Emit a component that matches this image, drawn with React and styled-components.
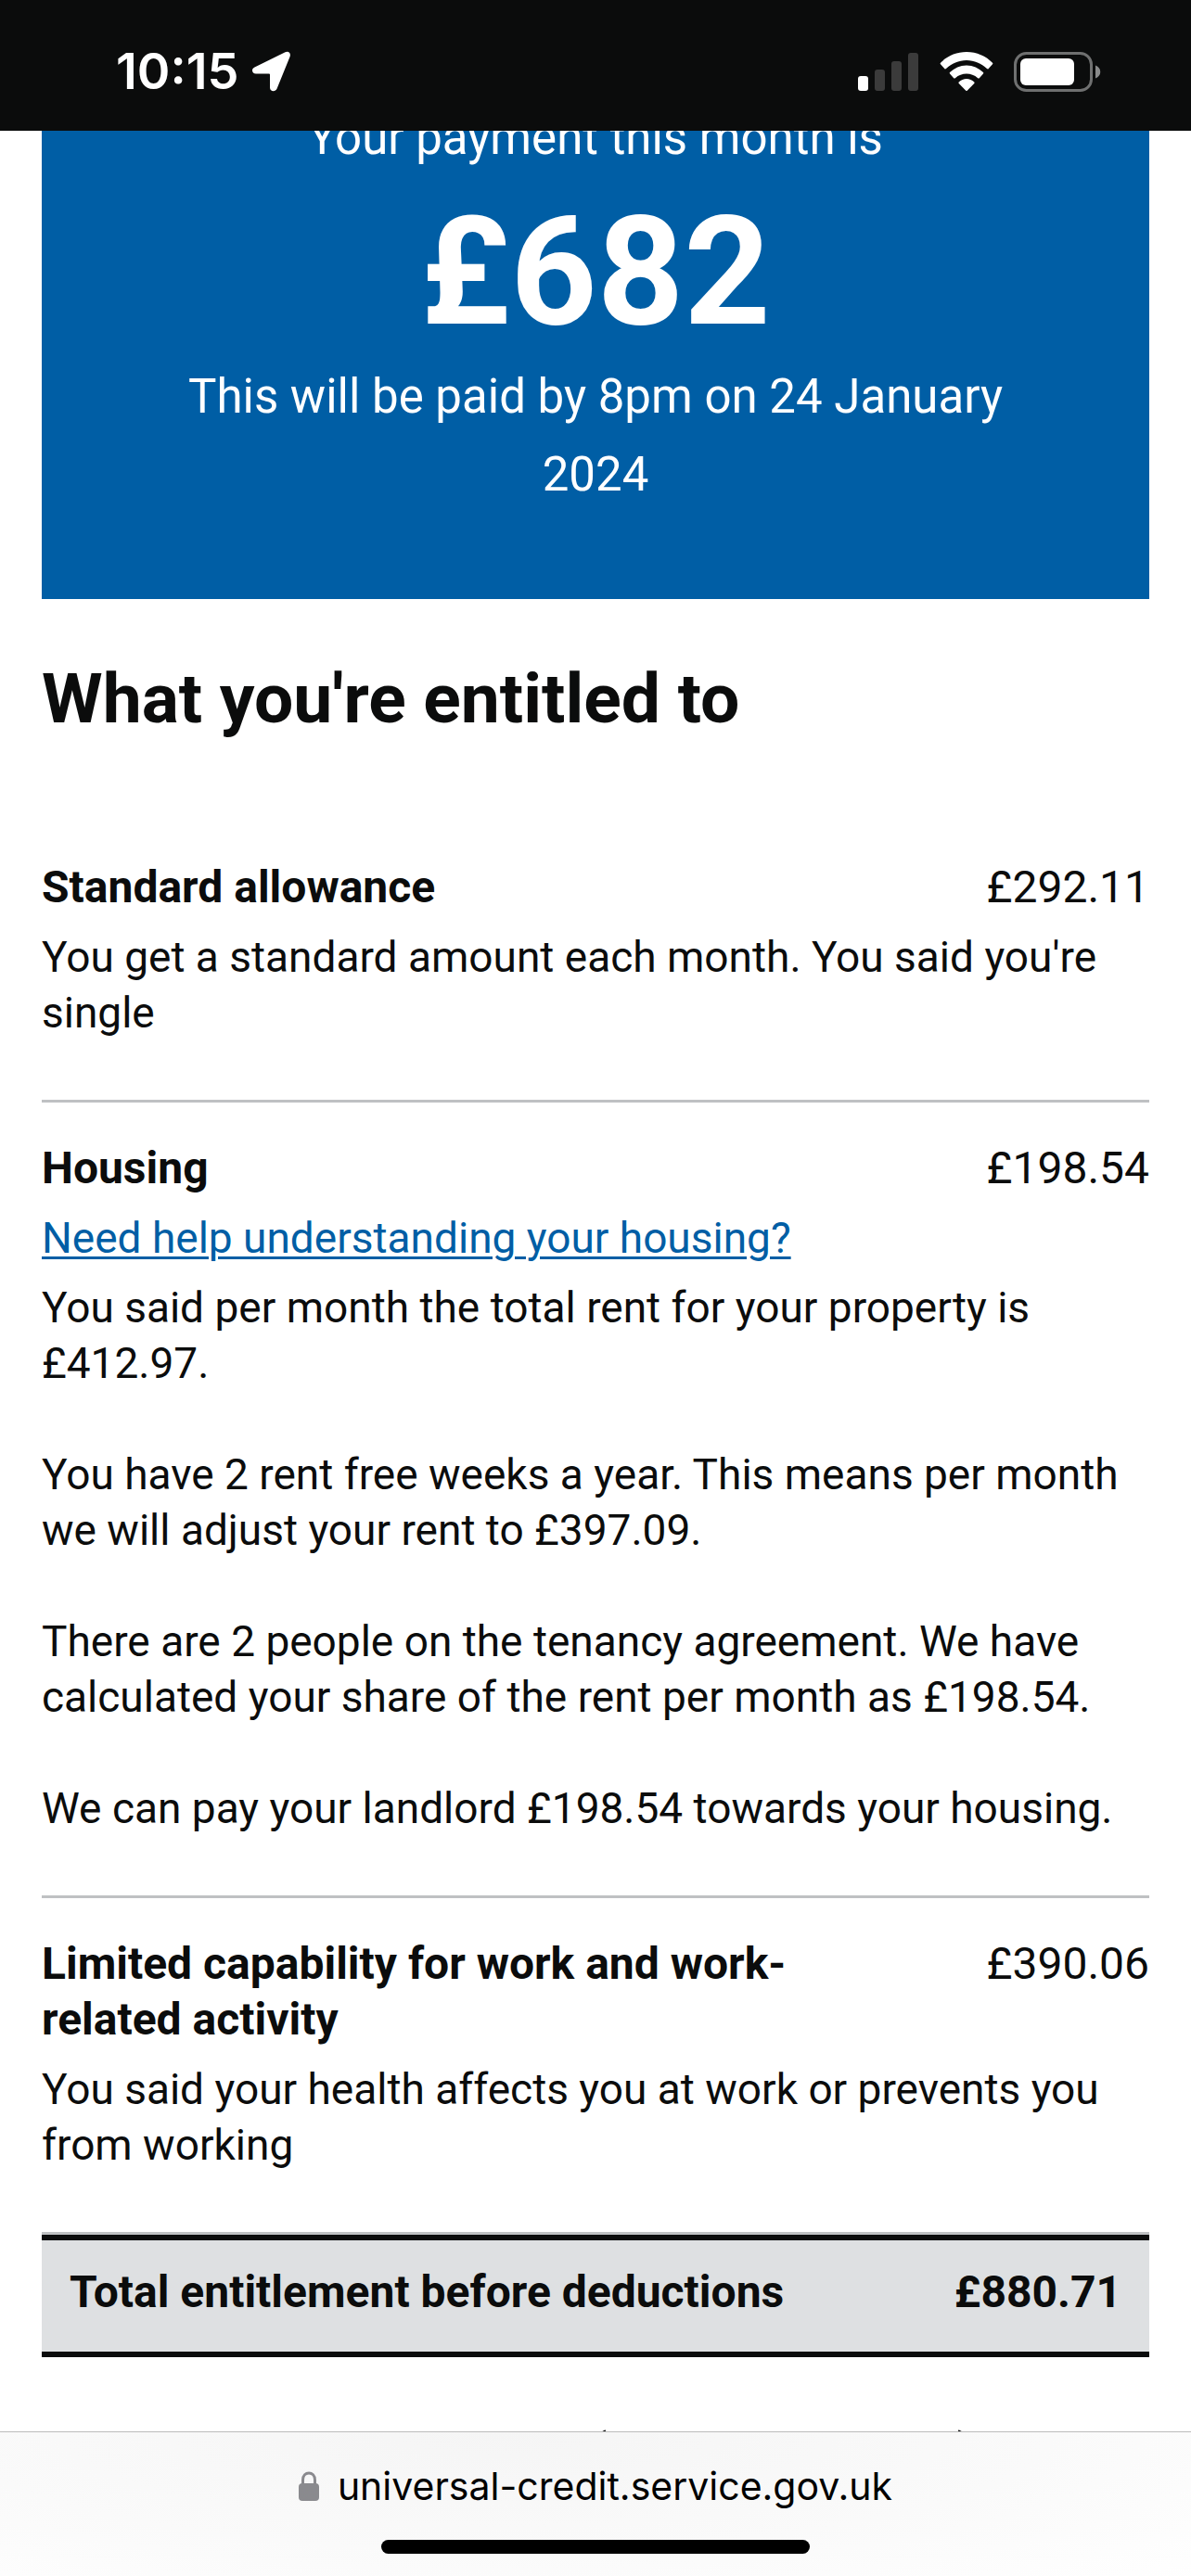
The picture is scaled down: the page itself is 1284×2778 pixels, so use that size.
import React from 'react';
import styled, { createGlobalStyle } from 'styled-components';

const GlobalStyle = createGlobalStyle`
  * {
    box-sizing: border-box;
  }

  body {
    margin: 0;
    background: #ffffff;
    color: #0b0c0c;
    font-family: Roboto, "Noto Sans", sans-serif;
  }

  h1, h2, h3, p {
    margin: 0;
  }
`;

const Screen = styled.div`
  display: flex;
  flex-direction: column;
  height: 100vh;
`;

const StatusBar = styled.header`
  display: flex;
  align-items: center;
  justify-content: space-between;
  flex: none;
  padding: 44px 96px 31px 125px;
  background: #0b0c0c;
  color: #ffffff;
`;

const StatusGroup = styled.div`
  display: flex;
  align-items: center;
  gap: ${(props) => props.$gap};
`;

const Time = styled.time`
  font-family: Inter, sans-serif;
  font-size: 54px;
  font-weight: 600;
  line-height: 66px;
`;

const Viewport = styled.main`
  flex: 1;
  min-height: 0;
  overflow: hidden;
`;

// The page is scrolled so that the top of the panel sits behind the status bar
const Content = styled.div`
  margin-top: -84px;
  padding: 0 45px;
`;

const Panel = styled.section`
  padding: 50px 120px 92px;
  background: #005ea5;
  color: #ffffff;
  text-align: center;
`;

const PanelText = styled.p`
  font-size: 51px;
  line-height: 84px;
`;

const PanelAmount = styled.h1`
  margin-top: 10px;
  font-size: 163px;
  font-weight: 700;
  line-height: 185px;
`;

const Heading = styled.h2`
  margin: 68px 0 94px;
  font-size: 75px;
  font-weight: 700;
  line-height: 78px;
`;

const Row = styled.section`
  display: flex;
  flex-direction: column;
  gap: 15px;
  padding: 41px 0 64px;
  border-bottom: 3px solid #bfc1c3;
  font-size: 46px;
  line-height: 60px;
`;

const RowHeader = styled.div`
  display: grid;
  grid-template-columns: 3fr 1fr;
`;

const RowTitle = styled.h3`
  font-size: 48px;
  font-weight: 700;
`;

const Amount = styled.p`
  font-size: 48px;
  text-align: right;
`;

const Paragraphs = styled.div`
  display: flex;
  flex-direction: column;
  gap: 60px;
`;

const HelpLink = styled.a`
  align-self: flex-start;
  color: #005ea5;
  text-decoration-thickness: 3px;
  text-underline-offset: 4px;
`;

const Total = styled.div`
  display: flex;
  justify-content: space-between;
  margin-bottom: 72px;
  padding: 26px 30px 34px;
  border: solid #0b0c0c;
  border-width: 6px 0;
  background: #dee0e2;
  font-size: 48px;
  font-weight: 700;
  line-height: 60px;
`;

const BrowserBar = styled.footer`
  display: flex;
  flex-direction: column;
  align-items: center;
  justify-content: space-between;
  flex: none;
  height: 156px;
  padding: 31px 0 24px;
  border-top: 1px solid #bcbcbc;
  background: radial-gradient(ellipse 84% 150% at 42% 0%, #f5f5f5 0%, #fafafa 55%, #ffffff 100%);
`;

const Address = styled.div`
  display: flex;
  align-items: center;
  gap: 20px;
  color: #000000;
  font-family: Inter, sans-serif;
  font-size: 41px;
  line-height: 54px;
`;

const HomeIndicator = styled.div`
  width: 36%;
  height: 15px;
  border-radius: 8px;
  background: #000000;
`;

const LocationIcon = () => (
  <svg width="43" height="44" viewBox="0 0 43 44" aria-hidden="true">
    <path
      d="M3.500 17.500 L36.500 1.300 C40-.5 43 2.500 41.500 6.200 L27.500 40.800 C26 44.500 20 44 20 39.500 V25.500 Q20 24.500 19 24.500 H5 C.5 24.500 -.5 19.500 3.500 17.500Z"
      fill="#fff"
    />
  </svg>
);

const SignalIcon = () => (
  <svg width="66" height="52" viewBox="0 0 66 52" aria-hidden="true">
    <rect x="0" y="31" width="11" height="16" rx="3" fill="#fff" />
    <rect x="18" y="24" width="11" height="23" rx="3" fill="#3b3b3b" />
    <rect x="36" y="15" width="11" height="32" rx="3" fill="#3b3b3b" />
    <rect x="54" y="6" width="11" height="41" rx="3" fill="#3b3b3b" />
  </svg>
);

const WifiIcon = () => (
  <svg width="58" height="43" viewBox="0 0 58 43" aria-hidden="true" fill="#fff">
    <path d="M29 0 C40 0 50 4.500 57 11.700 Q57.700 12.500 57 13.300 L52.500 18.200 Q51.800 18.700 51 18 C45 12.500 37.500 9 29 9 S13 12.500 7 18 Q6.200 18.700 5.500 18.200 L1 13.300 Q.3 12.500 1 11.700 C8 4.500 18 0 29 0Z" />
    <path d="M29 14.500 C36 14.500 42 17.500 47 22 Q47.700 22.700 47 23.500 L42.800 28.200 Q42 28.800 41.200 28.200 C37.500 25 33.500 23.500 29 23.500 S20.500 25 16.800 28.200 Q16 28.800 15.200 28.200 L11 23.500 Q10.300 22.700 11 22 C16 17.500 22 14.500 29 14.500Z" />
    <path d="M29 29 C32 29 35 30.500 37.300 32.500 Q38 33.200 37.300 34 L29.700 41.700 Q29 42.300 28.300 41.700 L20.700 34 Q20 33.200 20.700 32.500 C23 30.500 26 29 29 29Z" />
  </svg>
);

const BatteryIcon = () => (
  <svg width="95" height="43" viewBox="0 0 95 43" aria-hidden="true">
    <rect x="1.500" y="1.500" width="82" height="40" rx="12" fill="none" stroke="#6f7070" strokeWidth="3" />
    <rect x="7" y="7" width="58" height="29" rx="6" fill="#fff" />
    <path d="M88 14.500 C95 17 95 26 88 28.500Z" fill="#8a8b8b" />
  </svg>
);

const LockIcon = () => (
  <svg width="22" height="33" viewBox="0 0 22 33" aria-hidden="true">
    <path d="M4.500 16 V9.500 C4.500 -.5 17.500 -.5 17.500 9.500 V16" fill="none" stroke="#8a8a8e" strokeWidth="3" />
    <rect x="0" y="13" width="22" height="19" rx="4" fill="#8a8a8e" />
  </svg>
);

const EntitlementRow = ({ title, amount, children }) => (
  <Row>
    <RowHeader>
      <RowTitle>{title}</RowTitle>
      <Amount>{amount}</Amount>
    </RowHeader>
    {children}
  </Row>
);

const App = () => (
  <Screen>
    <GlobalStyle />
    <StatusBar>
      <StatusGroup $gap="14px">
        <Time>10:15</Time>
        <LocationIcon />
      </StatusGroup>
      <StatusGroup $gap="22px">
        <SignalIcon />
        <WifiIcon />
        <BatteryIcon />
      </StatusGroup>
    </StatusBar>

    <Viewport>
      <Content>
        <Panel>
          <PanelText>Your payment this month is</PanelText>
          <PanelAmount>£682</PanelAmount>
          <PanelText>This will be paid by 8pm on 24 January 2024</PanelText>
        </Panel>

        <Heading>What you're entitled to</Heading>

        <EntitlementRow title="Standard allowance" amount="£292.11">
          <p>You get a standard amount each month. You said you're single</p>
        </EntitlementRow>

        <EntitlementRow title="Housing" amount="£198.54">
          <HelpLink href="#housing-help">Need help understanding your housing?</HelpLink>
          <Paragraphs>
            <p>You said per month the total rent for your property is £412.97.</p>
            <p>You have 2 rent free weeks a year. This means per month we will adjust your rent to £397.09.</p>
            <p>There are 2 people on the tenancy agreement. We have calculated your share of the rent per month as £198.54.</p>
            <p>We can pay your landlord £198.54 towards your housing.</p>
          </Paragraphs>
        </EntitlementRow>

        <EntitlementRow title="Limited capability for work and work-related activity" amount="£390.06">
          <p>You said your health affects you at work or prevents you from working</p>
        </EntitlementRow>

        <Total>
          <p>Total entitlement before deductions</p>
          <p>£880.71</p>
        </Total>

        <Heading>What we take off (deductions)</Heading>
      </Content>
    </Viewport>

    <BrowserBar>
      <Address>
        <LockIcon />
        universal-credit.service.gov.uk
      </Address>
      <HomeIndicator />
    </BrowserBar>
  </Screen>
);

export default App;
